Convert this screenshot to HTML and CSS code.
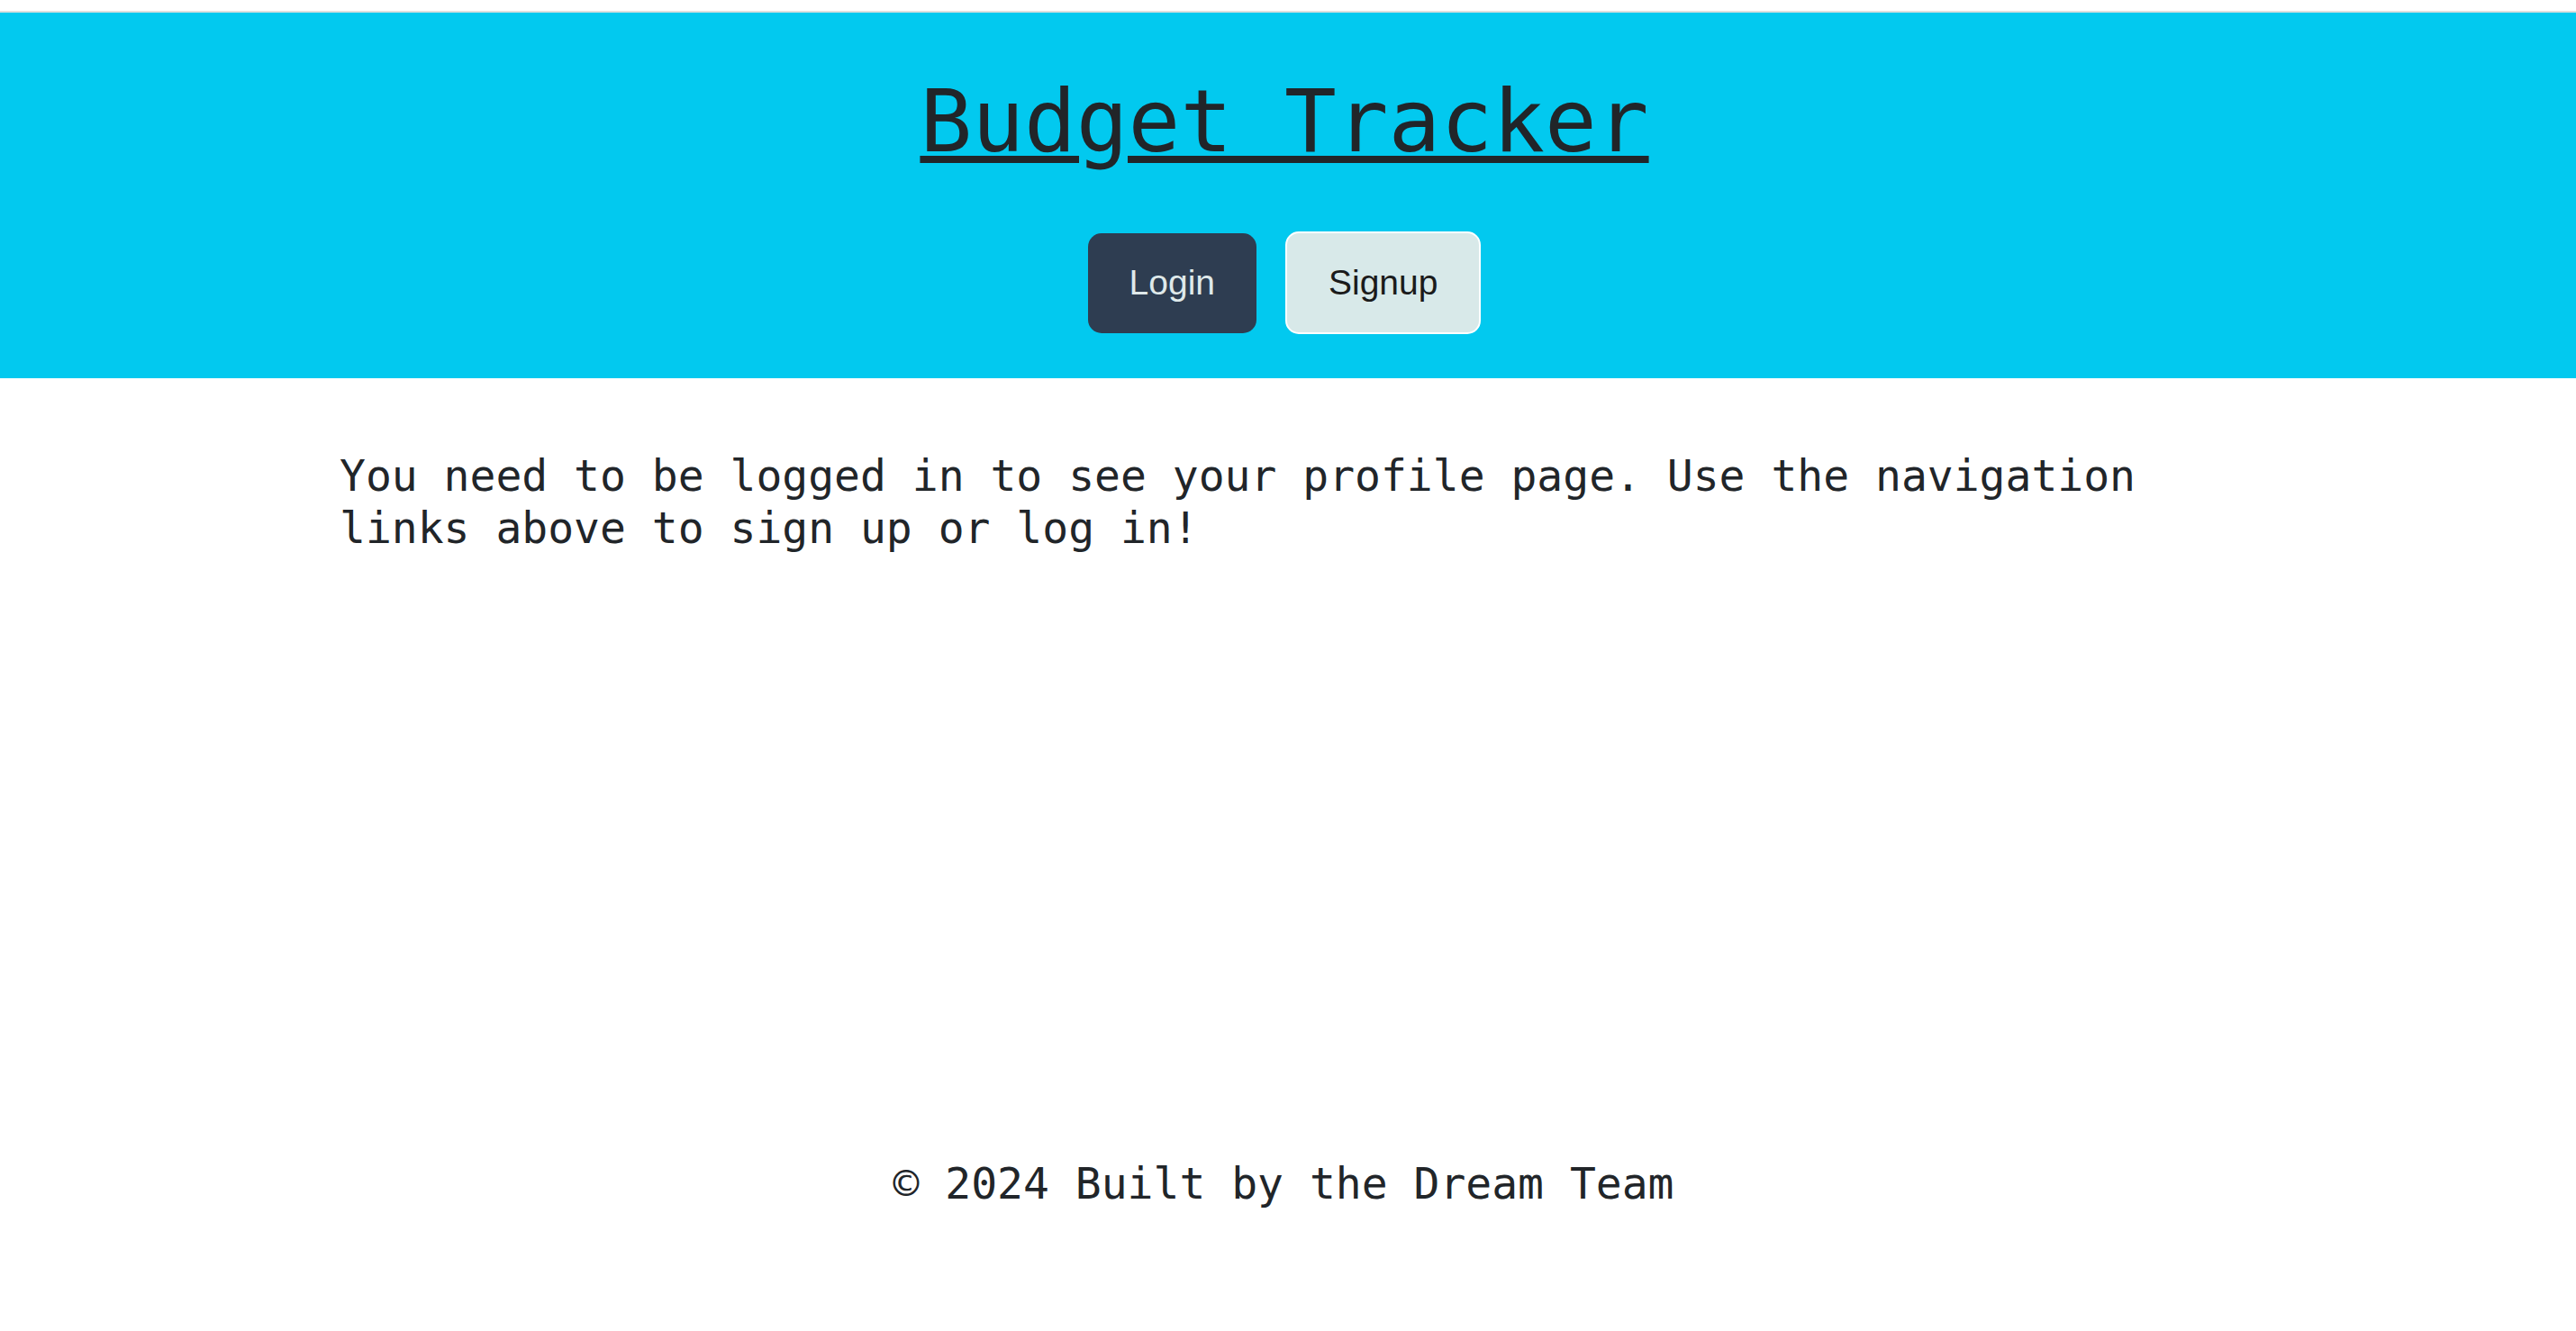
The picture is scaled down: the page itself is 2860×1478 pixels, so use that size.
FILE: index.html
```html
<!DOCTYPE html>
<html lang="en">
<head>
<meta charset="utf-8">
<title>Budget Tracker</title>
<link rel="stylesheet" href="styles.css">
</head>
<body>
<div class="page">
  <div class="topline"></div>
  <header class="header">
    <h1 class="title"><a href="#" class="title-link">Budget Tracker</a></h1>
    <nav class="nav">
      <a href="#" class="btn btn-login">Login</a>
      <a href="#" class="btn btn-signup">Signup</a>
    </nav>
  </header>
  <main class="main">
    <p class="message">You need to be logged in to see your profile page. Use the navigation links above to sign up or log in!</p>
  </main>
  <footer class="footer">
    <p class="copy">© 2024 Built by the Dream Team</p>
  </footer>
</div>
</body>
</html>
```

FILE: styles.css
```css
* { box-sizing: border-box; }
html, body { margin: 0; padding: 0; background: #ffffff; }
body {
  font-family: "DejaVu Sans Mono", "Liberation Mono", monospace;
  color: #212529;
}
.page {
  min-height: 1478px;
  display: flex;
  flex-direction: column;
}
.topline {
  height: 14px;
  border-bottom: 2px solid #dedfdd;
  background: #ffffff;
}
.header {
  background: #02c9ef;
  padding: 65px 8px 49px 0;
  display: flex;
  flex-direction: column;
  align-items: center;
}
.title {
  margin: 0;
  font-size: 96px;
  font-weight: normal;
  line-height: 112px;
}
.title-link {
  color: #212529;
  text-decoration: underline;
  text-decoration-thickness: 8px;
  text-underline-offset: 5px;
}
.nav {
  margin-top: 66px;
  display: flex;
  align-items: center;
  gap: 32px;
}
.btn {
  font-family: "Liberation Sans", Arial, sans-serif;
  font-size: 39px;
  text-decoration: none;
  display: flex;
  align-items: center;
  justify-content: center;
  border-radius: 15px;
}
.btn-login {
  background: #2e3d51;
  color: #dfe9ea;
  height: 111px;
  padding: 0 46px;
}
.btn-signup {
  background: #d8e9e9;
  color: #1b1b1b;
  height: 114px;
  padding: 0 46px;
  border: 2px solid #ffffff;
}
.main {
  flex: 1;
  padding: 80px 6px 0 0;
}
.message {
  margin: 0 auto;
  width: 2100px;
  font-size: 48px;
  line-height: 57.6px;
}
.footer {
  padding-bottom: 134px;
  text-align: center;
}
.copy {
  margin: 0;
  font-size: 48px;
  line-height: 57.6px;
  padding-right: 10px;
}
```
